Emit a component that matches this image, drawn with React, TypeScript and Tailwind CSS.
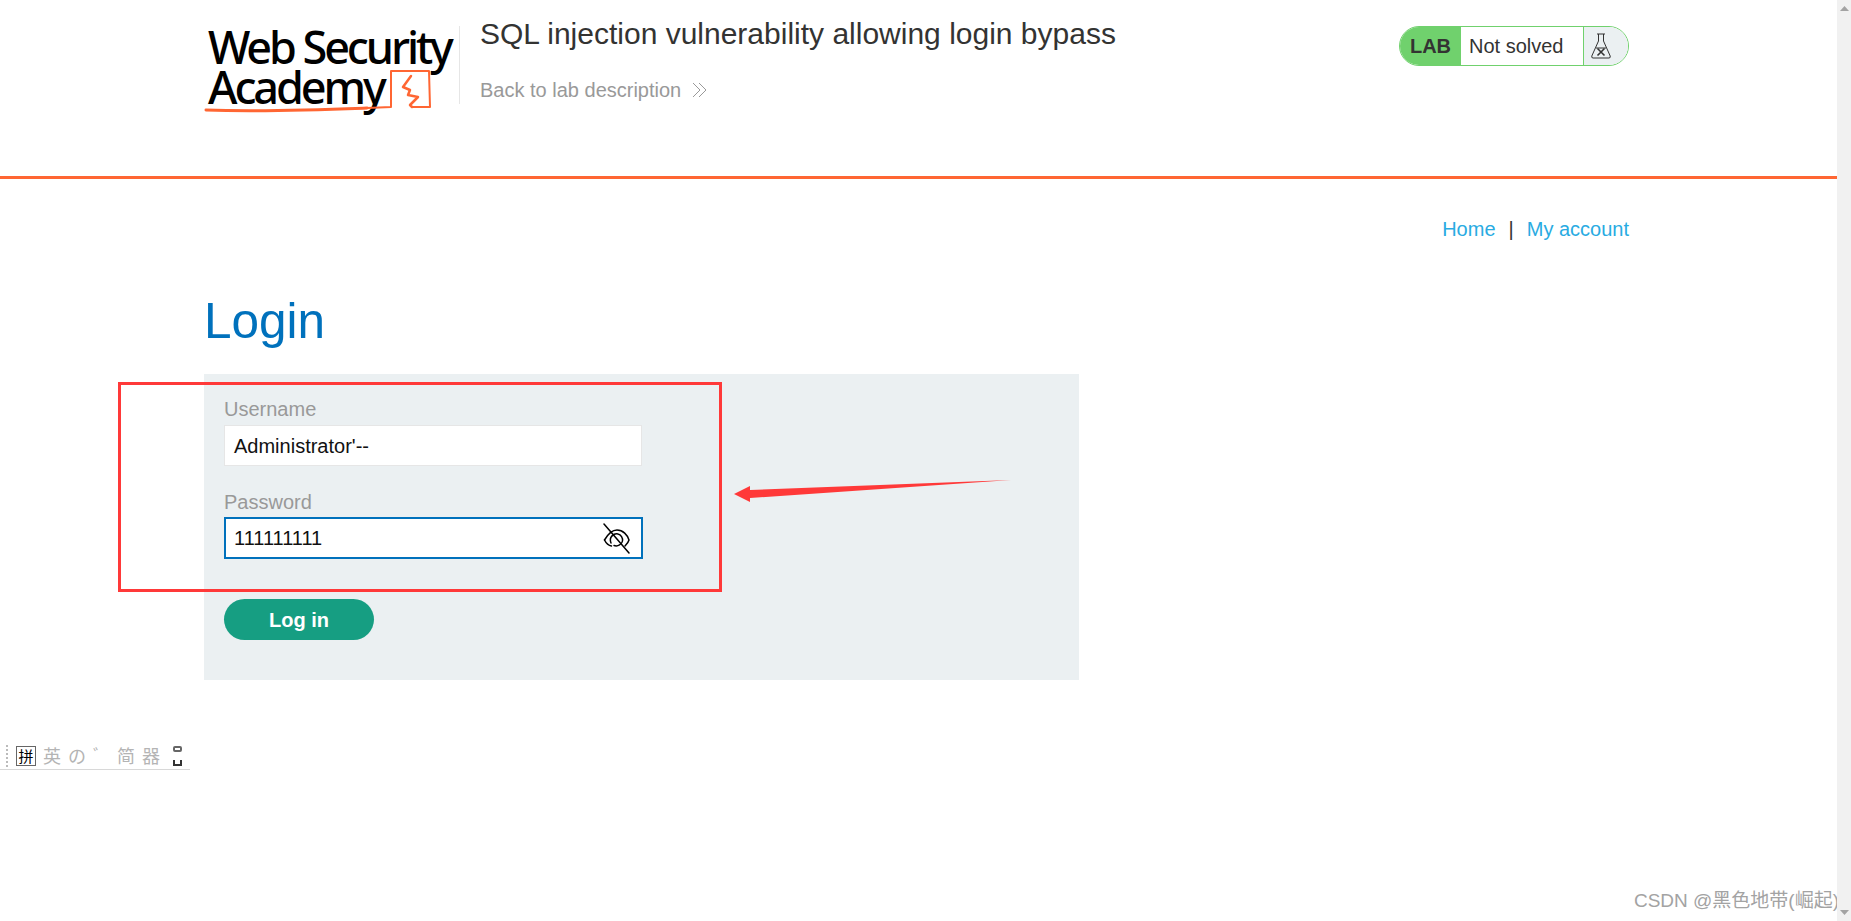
import React from "react";

const sans = "font-['Liberation_Sans',Arial,sans-serif]";

function Logo() {
  return (
    <div className="relative h-[88px] w-[250px] shrink-0 pt-[1px] font-['Noto_Sans',sans-serif] font-medium text-black">
      <div className="pl-[4px] text-[45px] leading-[40px] tracking-[-3.1px] whitespace-nowrap">Web Security</div>
      <div className="pl-[4px] text-[45px] leading-[40px] tracking-[-3.1px] whitespace-nowrap">Academy</div>
      <svg className="absolute left-0 top-[40px]" width="250" height="52" viewBox="0 0 250 52" fill="none" stroke="#ff6633" strokeLinecap="round" strokeLinejoin="round">
        <path d="M163 42 L187 41 L187 5 L225 5 L226 41 L208 41" strokeWidth="2" />
        <path d="M2 44 C60 46 110 44 163 42" strokeWidth="3" />
        <path d="M207 10 L199 21 L206 24 L204 29 L214 31 L206 39 L208 41" strokeWidth="2.5" />
      </svg>
    </div>
  );
}

function Flask() {
  return (
    <svg width="20" height="26" viewBox="0 0 20 26" fill="none" stroke="#333" strokeWidth="1">
      <path d="M6 1 H14 M7.5 1 V8 L0.8 23 Q0.3 25 2 25 H18 Q19.7 25 19.2 23 L12.5 8 V1" />
      <path d="M5 15 H15" />
      <path d="M6.5 15.5 L13.5 22.5 M13.5 15.5 L6.5 22.5" strokeWidth="1.6" />
    </svg>
  );
}

function EyeOff() {
  return (
    <svg width="27" height="31" viewBox="0 0 27 31" fill="none" stroke="#000" strokeWidth="1.5" strokeLinecap="round">
      <path d="M1 1 L26 30" />
      <path d="M1.5 17 C5 11 9 7 14 7 C20 7 24.5 12 26 17 C25.5 19 24 21 22 23" />
      <path d="M1.5 17 C3 20 5.5 22.5 8.5 23" />
      <path d="M8 20 C5.5 14 11 10 15 11 C18 11.5 20 15 19.5 18 C19 21 15 24 11 22.5" />
    </svg>
  );
}

function Field({ label, value, focused }: { label: string; value: string; focused?: boolean }) {
  return (
    <div>
      <div className="text-[20px] leading-[25px] text-[#999999]">{label}</div>
      <div className={focused ? "mt-[2px] flex h-[42px] w-[419px] items-center justify-between border-2 border-[#0071bc] bg-white pl-[8px] pr-[11px] text-[20px] text-[#111111]" : "mt-[3px] flex h-[41px] w-[418px] items-center border border-[#e6e6e6] bg-white pl-[9px] text-[20px] text-[#111111]"}>
        <span>{value}</span>
        {focused && <EyeOff />}
      </div>
    </div>
  );
}

export default function App() {
  return (
    <div className={`relative h-[921px] w-[1851px] overflow-hidden bg-white ${sans}`}>
      <div className="mr-[14px]">
        <header className="flex h-[179px] border-b-[3px] border-[#ff6633] pl-[204px] pr-[208px]">
          <div className="flex h-[88px] pt-[26px] box-content">
            <Logo />
            <div className="ml-[5px] h-[78px] w-px bg-[#e6e6e6]" />
          </div>
          <div className="ml-[20px] flex-1 pt-[16px]">
            <h2 className="text-[30px] leading-[36px] text-[#333332]">SQL injection vulnerability allowing login bypass</h2>
            <div className="mt-[25px] flex items-center gap-[11px] text-[20px] leading-[26px] text-[#999999]">
              Back to lab description
              <svg width="15" height="16" viewBox="0 0 15 16" fill="none" stroke="#999999" strokeWidth="1">
                <path d="M1 1 L8 8 L1 15 M7 1 L14 8 L7 15" />
              </svg>
            </div>
          </div>
          <div className="mt-[26px] flex h-[40px] w-[230px] overflow-hidden rounded-[20px] border border-[#70d16d] text-[20px]">
            <div className="flex w-[61px] items-center justify-center bg-[#70d16d] font-bold text-[#333332]">LAB</div>
            <div className="flex flex-1 items-center pl-[8px] text-[#333332]">Not solved</div>
            <div className="flex w-[45px] items-center justify-center border-l border-[#70d16d] bg-[#ebf0f2] pr-[10px]">
              <Flask />
            </div>
          </div>
        </header>

        <main className="pl-[204px] pr-[208px]">
          <nav className="flex justify-end gap-[13px] pt-[37px] text-[20px] leading-[26px] text-[#333332]">
            <span className="text-[#29abe2]">Home</span>
            <span>|</span>
            <span className="text-[#29abe2]">My account</span>
          </nav>
          <h1 className="mt-[47px] text-[49.5px] leading-[64px] text-[#0071bc]">Login</h1>
          <section className="mt-[21px] h-[306px] w-[875px] bg-[#ebf0f2] px-[20px] pt-[23px]">
            <div className="flex flex-col gap-[24px]">
              <Field label="Username" value="Administrator'--" />
              <Field label="Password" value="111111111" focused />
            </div>
            <button className="mt-[40px] block h-[41px] w-[150px] rounded-[21px] bg-[#169e82] text-[20px] font-bold text-white">Log in</button>
          </section>
        </main>
      </div>

      {/* annotation drawn over the page */}
      <div className="absolute left-[118px] top-[382px] h-[210px] w-[604px] border-[3px] border-[#ff3939]" />
      <svg className="absolute left-[730px] top-[475px]" width="285" height="30" viewBox="0 0 285 30" fill="#ff3939">
        <path d="M4 19 L20 11 L20 15 L281 5 L20 23 L20 27 Z" />
      </svg>

      {/* ime toolbar */}
      <div className="absolute left-0 top-[742px] flex h-[28px] w-[190px] items-center gap-[7px] border-b border-[#d8d8d8] pl-[6px] font-['Noto_Sans_CJK_SC',sans-serif] text-[18px] text-[#b4b4b4]">
        <div className="h-[22px] border-l-2 border-dotted border-[#bbbbbb]" />
        <span className="ml-[1px] flex h-[20px] w-[20px] items-center justify-center border border-[#666666] text-[15px] leading-none text-black">拼</span>
        <span>英</span>
        <span>の</span>
        <span>ﾞ</span>
        <span className="ml-[8px]">简</span>
        <span>器</span>
        <div className="ml-[6px] flex flex-col gap-[8px]">
          <div className="h-[6px] w-[9px] rounded-[2px] border-2 border-[#666666]" />
          <div className="h-[6px] w-[9px] border-2 border-t-0 border-[#333333]" />
        </div>
      </div>

      {/* watermark */}
      <div className="absolute right-[12px] top-[890px] text-[19px] leading-[22px] text-[#a3a3a3] font-['Liberation_Sans','Noto_Sans_CJK_SC',sans-serif]">CSDN @黑色地带(崛起)</div>

      {/* scrollbar */}
      <div className="absolute bottom-0 right-0 top-0 flex w-[14px] flex-col items-center justify-between bg-[#f1f1f1] py-[6px]">
        <svg width="9" height="5" viewBox="0 0 9 5" fill="#a3a3a3"><path d="M4.5 0 L9 5 H0 Z" /></svg>
        <svg width="9" height="5" viewBox="0 0 9 5" fill="#a3a3a3"><path d="M0 0 H9 L4.5 5 Z" /></svg>
      </div>
    </div>
  );
}
